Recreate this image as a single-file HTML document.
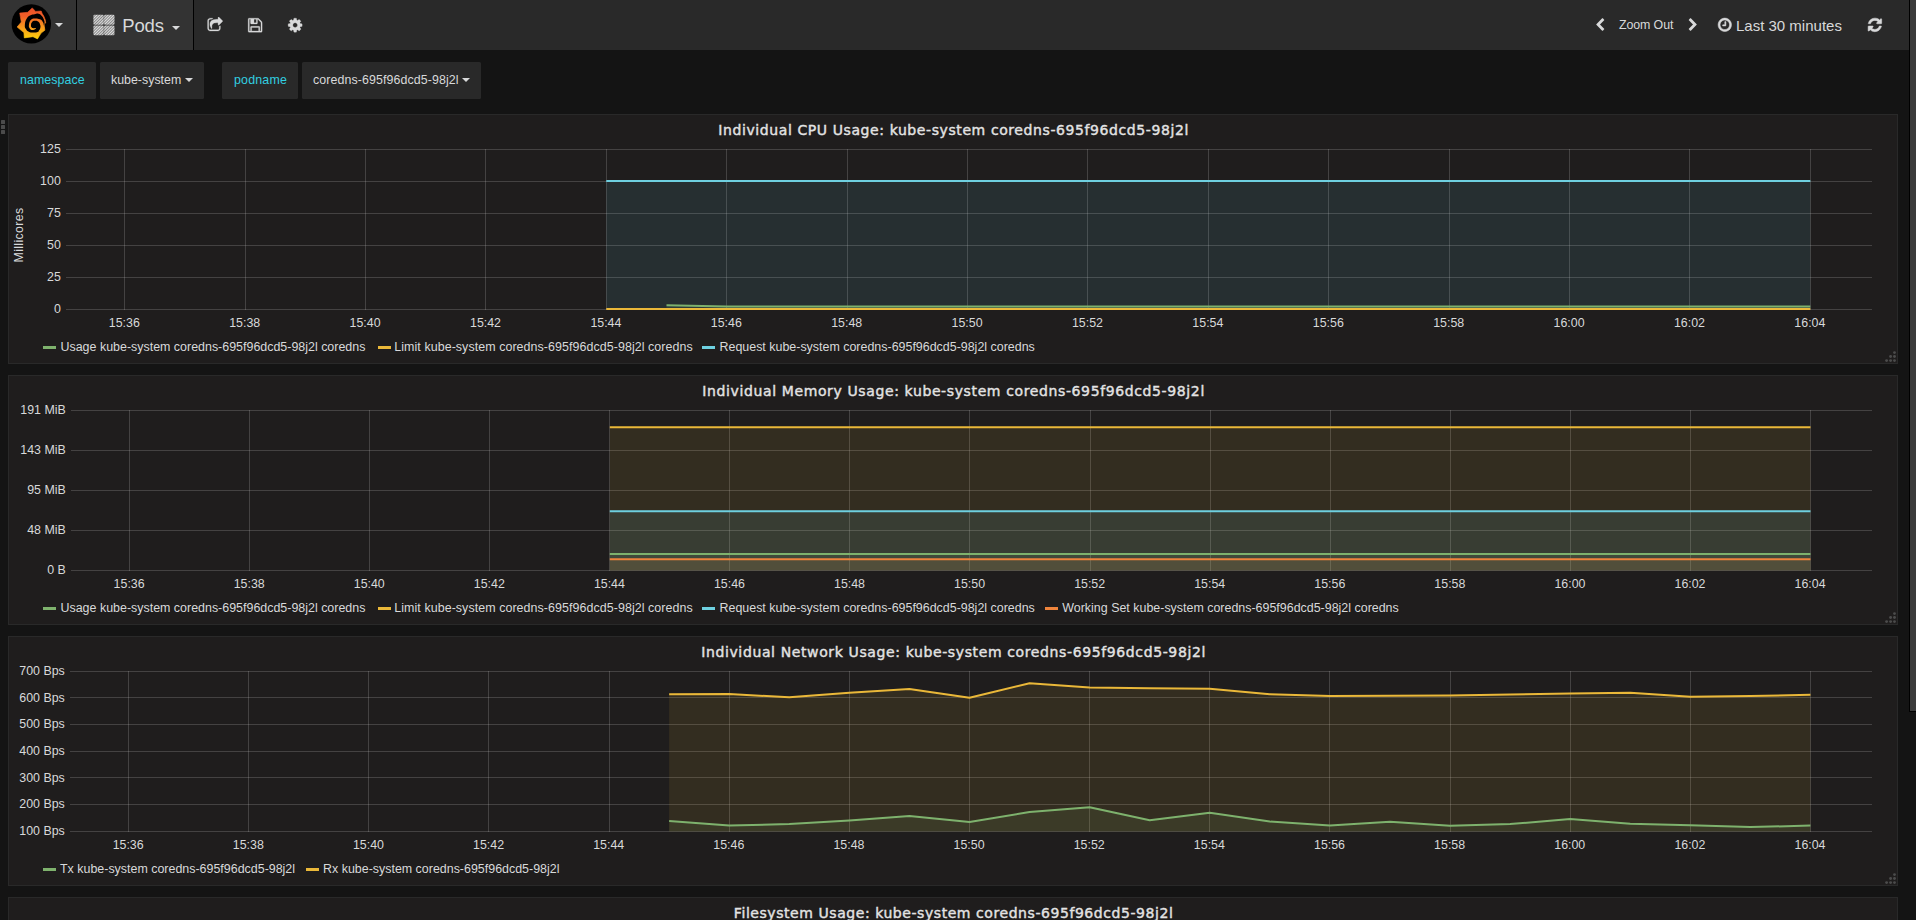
<!DOCTYPE html>
<html lang="en"><head><meta charset="utf-8"><title>Grafana - Pods</title>
<style>
html,body{margin:0;padding:0;width:1916px;height:920px;overflow:hidden;background:#141414}
body{position:relative;font-family:"Liberation Sans",Arial,sans-serif;color:#d8d9da}
.abs,.ic,.plot,.t{position:absolute}
.t{white-space:nowrap;line-height:1;margin:0;padding:0}
.nav{left:0;top:0;width:1909px;height:50px;background:#292929}
.navl{left:0;top:0;width:193px;height:50px;background:#333333}
.vline{width:1px;height:50px;top:0;background:#000}
.caret{width:0;height:0;border-left:4px solid transparent;border-right:4px solid transparent;border-top:4px solid #d8d9da}
.box{background:#292929;border-radius:1.5px;height:37px;top:62px}
.panel{left:8px;width:1888px;height:248px;background:#1f1d1d;border:1px solid #292929}
.title{font-family:"DejaVu Sans","Liberation Sans",sans-serif;font-size:14px;letter-spacing:0.59px;-webkit-text-stroke:0.4px #e3e3e3;color:#e3e3e3;transform:translateX(-50%);left:953.6px}
.yl{font-size:12.4px;text-align:right;width:60px;color:#d8d9da}
.xl{font-size:12.4px;transform:translateX(-50%);color:#d8d9da}
.lg{font-size:12.45px;color:#d8d9da}
.sw{height:3px;width:13px}
.var{font-size:12.4px;top:74.4px}
</style></head><body>

<div class="abs nav"></div><div class="abs navl"></div>
<div class="abs vline" style="left:76px"></div><div class="abs vline" style="left:193px"></div>
<svg class="ic" style="left:11px;top:4px;width:42px;height:42px" viewBox="0 0 42 42">
<defs><linearGradient id="gg" gradientUnits="userSpaceOnUse" x1="0" y1="5" x2="0" y2="35"><stop offset="0" stop-color="#ee5229"/><stop offset="0.25" stop-color="#f15f27"/><stop offset="0.6" stop-color="#f8981d"/><stop offset="1" stop-color="#fdd00b"/></linearGradient></defs>
<circle cx="20.3" cy="19.9" r="19.7" fill="#000"/>
<path fill="url(#gg)" stroke="url(#gg)" stroke-width="0.6" stroke-linejoin="round" d="M21.25 3.9 L24.6 7.4 L30.2 7.0 L31.2 9.6 L32.9 12.3 L34.3 16.0 L34.7 18.9 L33.3 19.9 L33.2 22.0 L33.9 26.2 L30.1 29.1 L26.5 34.9 L22.0 32.7 L13.3 33.9 L12.9 28.6 L6.1 23.0 L10.3 18.1 L8.7 9.1 L16.7 8.3Z"/>
<g transform="translate(-0.35,-0.25)"><path fill="#000" d="M33.90 19.60C34.03 17.75 33.80 17.45 33.10 15.60C32.40 13.75 32.40 13.60 31.10 12.20C29.80 10.80 29.70 10.43 27.90 10.00C26.10 9.57 25.88 10.12 23.90 10.50C21.92 10.88 21.90 10.47 20.00 11.50C18.10 12.53 17.75 12.22 16.30 14.60C14.85 16.98 14.43 18.25 14.20 21.00C13.97 23.75 14.32 23.80 15.40 25.60C16.48 27.40 16.60 27.40 18.50 28.20C20.40 29.00 20.75 28.85 23.00 28.80C25.25 28.75 25.55 28.80 27.50 28.00C29.45 27.20 29.52 26.85 30.80 25.60C32.08 24.35 31.82 24.50 32.60 23.00C33.38 21.50 33.77 21.45 33.90 19.60Z"/>
<path fill="url(#gg)" d="M33.30 26.20C34.53 24.65 33.53 23.65 33.20 21.60C32.87 19.55 32.98 19.50 32.00 18.00C31.02 16.50 31.25 16.43 29.30 15.60C27.35 14.77 26.43 14.57 24.20 14.70C21.97 14.83 21.88 14.52 20.40 16.10C18.92 17.68 18.58 18.80 18.30 21.00C18.02 23.20 18.27 23.60 19.30 24.90C20.33 26.20 20.90 26.30 22.40 26.20C23.90 26.10 25.17 24.93 25.30 24.50C25.43 24.07 24.00 24.75 22.90 24.50C21.80 24.25 21.53 24.38 20.90 23.50C20.27 22.62 20.25 22.30 20.40 21.00C20.55 19.70 20.55 19.28 21.50 18.30C22.45 17.32 22.70 17.23 24.20 17.10C25.70 16.97 26.17 16.82 27.50 17.80C28.83 18.78 28.97 19.32 29.50 21.00C30.03 22.68 29.90 22.80 29.60 24.50C29.30 26.20 27.37 27.37 28.30 27.80C29.23 28.23 32.07 27.75 33.30 26.20Z"/></g>
</svg>
<div class="abs caret" style="left:55px;top:23px"></div>
<svg class="ic" style="left:93px;top:14px;width:22px;height:22px" viewBox="0 0 22 22">
<defs><pattern id="hat" width="2" height="2" patternUnits="userSpaceOnUse" patternTransform="rotate(45)"><rect width="2" height="2" fill="#e0e0e0"/><rect width="0.7" height="2" fill="#5e5e5e"/></pattern></defs>
<rect x="0.4" y="0.8" width="10.4" height="9.9" rx="1.3" fill="url(#hat)"/><rect x="11.1" y="0.8" width="10.4" height="9.9" rx="1.3" fill="url(#hat)"/>
<rect x="0.4" y="11.5" width="10.4" height="9.8" rx="1.3" fill="url(#hat)"/><rect x="11.1" y="11.5" width="10.4" height="9.8" rx="1.3" fill="url(#hat)"/>
</svg>
<div class="t" id="pods" style="left:122.2px;top:17px;font-size:18.5px;letter-spacing:-0.15px;color:#d8d9da">Pods</div>
<div class="abs caret" style="left:172px;top:26px"></div>
<svg class="ic" style="left:206.5px;top:17.1px;width:16.3px;height:16.3px" viewBox="0 0 1792 1792"><path fill="#d8d9da" stroke="#d8d9da" stroke-width="30" stroke-linejoin="round" d="M1472 989v259q0 119-84.500 203.500t-203.500 84.500h-832q-119 0-203.500-84.500t-84.500-203.500v-832q0-119 84.500-203.500t203.500-84.500h255q13 0 22.500 9.500t9.500 22.500q0 27-26 32-77 26-133 60-10 4-16 4h-112q-66 0-113 47t-47 113v832q0 66 47 113t113 47h832q66 0 113-47t47-113v-214q0-19 18-29 28-13 54-37 16-16 35-8 21 9 21 29zm237-496l-384 384q-18 19-45 19-12 0-25-5-39-17-39-59v-192h-160q-323 0-438 131-119 137-74 473 3 23-20 34-8 2-12 2-16 0-26-13-10-14-21-31t-39.500-68.500-49.500-99.500-38.500-114-17.500-122q0-49 3.500-91t14-90 28-88 47-81.500 68.500-74 94.500-61.500 124.500-48.500 159.500-30.500 196.500-11h160v-192q0-42 39-59 13-5 25-5 26 0 45 19l384 384q19 19 19 45t-19 45z"/></svg>
<svg class="ic" style="left:246.6px;top:16.6px;width:16.3px;height:16.3px" viewBox="0 0 1792 1792"><path fill="#d8d9da" stroke="#d8d9da" stroke-width="30" stroke-linejoin="round" d="M512 1536h768v-384h-768v384zm896 0h128v-896q0-14-10-38.500t-20-34.500l-281-281q-10-10-34-20t-39-10v416q0 40-28 68t-68 28h-576q-40 0-68-28t-28-68v-416h-128v1280h128v-416q0-40 28-68t68-28h832q40 0 68 28t28 68v416zm-384-928v-320q0-13-9.500-22.500t-22.500-9.500h-192q-13 0-22.500 9.500t-9.500 22.500v320q0 13 9.500 22.500t22.500 9.500h192q13 0 22.500-9.500t9.500-22.500zm640 32v928q0 40-28 68t-68 28h-1344q-40 0-68-28t-28-68v-1344q0-40 28-68t68-28h928q40 0 88 20t76 48l280 280q28 28 48 76t20 88z"/></svg>
<svg class="ic" style="left:286.6px;top:16.6px;width:16.3px;height:16.3px" viewBox="0 0 1792 1792"><path fill="#d8d9da" stroke="#d8d9da" stroke-width="30" stroke-linejoin="round" d="M1152 896q0-106-75-181t-181-75-181 75-75 181 75 181 181 75 181-75 75-181zm512-109v222q0 12-8 23t-20 13l-185 28q-19 54-39 91 35 50 107 138 10 12 10 25t-9 23q-27 37-99 108t-94 71q-12 0-26-9l-138-108q-44 23-91 38-16 136-29 186-7 28-36 28h-222q-14 0-24.500-8.500t-11.500-21.500l-28-184q-49-16-90-37l-141 107q-10 9-25 9-14 0-25-11-126-114-165-168-7-10-7-23 0-12 8-23 15-21 51-66.500t54-70.500q-27-50-41-99l-183-27q-13-2-21-12.500t-8-23.500v-222q0-12 8-23t19-13l186-28q14-46 39-92-40-57-107-138-10-12-10-24 0-10 9-23 26-36 98.500-107.500t94.500-71.500q13 0 26 10l138 107q44-23 91-38 16-136 29-186 7-28 36-28h222q14 0 24.500 8.500t11.500 21.500l28 184q49 16 90 37l142-107q9-9 24-9 13 0 25 10 129 119 165 170 7 8 7 22 0 12-8 23-15 21-51 66.500t-54 70.500q26 50 41 98l183 28q13 2 21 12.500t8 23.500z"/></svg>
<svg class="ic" style="left:1593.0px;top:18px;width:14px;height:14px" viewBox="0 0 1792 1792"><path fill="#d8d9da" d="M1427 301l-531 531 531 531q19 19 19 45t-19 45l-166 166q-19 19-45 19t-45-19l-742-742q-19-19-19-45t19-45l742-742q19-19 45-19t45 19l166 166q19 19 19 45t-19 45z"/></svg>
<div class="t" id="zoomout" style="left:1619px;top:19.4px;font-size:12.4px;letter-spacing:-0.1px">Zoom Out</div>
<svg class="ic" style="left:1686.4px;top:18px;width:14px;height:14px" viewBox="0 0 1792 1792"><path fill="#d8d9da" d="M1363 877l-742 742q-19 19-45 19t-45-19l-166-166q-19-19-19-45t19-45l531-531-531-531q-19-19-19-45t19-45l166-166q19-19 45-19t45 19l742 742q19 19 19 45t-19 45z"/></svg>
<svg class="ic" style="left:1716.8px;top:17.2px;width:15.6px;height:15.6px" viewBox="0 0 1792 1792"><path fill="#d8d9da" stroke="#d8d9da" stroke-width="60" stroke-linejoin="round" d="M1024 544v448q0 14-9 23t-23 9h-320q-14 0-23-9t-9-23v-64q0-14 9-23t23-9h224v-352q0-14 9-23t23-9h64q14 0 23 9t9 23zm416 352q0-148-73-273t-198-198-273-73-273 73-198 198-73 273 73 273 198 198 273 73 273-73 198-198 73-273zm224 0q0 209-103 385.500t-279.500 279.500-385.500 103-385.500-103-279.500-279.500-103-385.500 103-385.500 279.500-279.500 385.500-103 385.500 103 279.500 279.500 103 385.500z"/></svg>
<div class="t" id="last30" style="left:1736px;top:18px;font-size:15px">Last 30 minutes</div>
<svg class="ic" style="left:1867.2px;top:17.4px;width:15.8px;height:15.8px" viewBox="0 0 1792 1792"><path fill="#d8d9da" stroke="#d8d9da" stroke-width="60" stroke-linejoin="round" d="M1639 1056q0 5-1 7-64 268-268 434.500t-478 166.500q-146 0-282.500-55t-243.500-157l-129 129q-19 19-45 19t-45-19-19-45v-448q0-26 19-45t45-19h448q26 0 45 19t19 45-19 45l-137 137q71 66 161 102t187 36q134 0 250-65t186-179q11-17 53-117 8-23 30-23h192q13 0 22.500 9.500t9.500 22.500zm25-800v448q0 26-19 45t-45 19h-448q-26 0-45-19t-19-45 19-45l138-138q-148-137-349-137-134 0-250 65t-186 179q-11 17-53 117-8 23-30 23h-199q-13 0-22.500-9.500t-9.500-22.500v-7q65-268 270-434.500t480-166.500q146 0 284 55.500t245 156.500l130-129q19-19 45-19t45 19 19 45z"/></svg>
<div class="abs" style="left:1909px;top:0;width:7px;height:712px;background:#000"></div>
<div class="abs" style="left:1910px;top:0;width:6px;height:711px;background:#3b3b3b"></div>
<div class="abs box" style="left:8px;width:88px"></div><div class="t var" id="v1" style="left:20px;color:#32cfe0;letter-spacing:0.06px">namespace</div>
<div class="abs box" style="left:100px;width:104px"></div><div class="t var" id="v2" style="left:111px">kube-system</div><div class="abs caret" style="left:185px;top:78px"></div>
<div class="abs box" style="left:222px;width:76px"></div><div class="t var" id="v3" style="left:234px;color:#32cfe0;letter-spacing:0.2px">podname</div>
<div class="abs box" style="left:302px;width:179px"></div><div class="t var" id="v4" style="left:313px;letter-spacing:0.1px">coredns-695f96dcd5-98j2l</div><div class="abs caret" style="left:462px;top:78px"></div>
<div class="abs" style="left:1px;top:120px;width:4px;height:4px;background:#4b4b4b;border-radius:0.5px"></div>
<div class="abs" style="left:1px;top:125px;width:4px;height:4px;background:#4b4b4b;border-radius:0.5px"></div>
<div class="abs" style="left:1px;top:130px;width:4px;height:4px;background:#4b4b4b;border-radius:0.5px"></div>
<div class="abs panel" style="top:114px"></div>
<div class="t title" style="top:122.6px">Individual CPU Usage: kube-system coredns-695f96dcd5-98j2l</div>
<svg class="plot" style="left:8px;top:114px" width="1890" height="250" viewBox="8 114 1890 250">
<path d="M66 149.5H1872" stroke="rgba(200,200,200,0.22)" stroke-width="1" fill="none"/>
<path d="M66 181.5H1872" stroke="rgba(200,200,200,0.22)" stroke-width="1" fill="none"/>
<path d="M66 213.5H1872" stroke="rgba(200,200,200,0.22)" stroke-width="1" fill="none"/>
<path d="M66 245.5H1872" stroke="rgba(200,200,200,0.22)" stroke-width="1" fill="none"/>
<path d="M66 277.5H1872" stroke="rgba(200,200,200,0.22)" stroke-width="1" fill="none"/>
<path d="M66 309.5H1872" stroke="rgba(200,200,200,0.22)" stroke-width="1" fill="none"/>
<path d="M124.5 149V310" stroke="rgba(200,200,200,0.22)" stroke-width="1" fill="none"/>
<path d="M245.5 149V310" stroke="rgba(200,200,200,0.22)" stroke-width="1" fill="none"/>
<path d="M365.5 149V310" stroke="rgba(200,200,200,0.22)" stroke-width="1" fill="none"/>
<path d="M485.5 149V310" stroke="rgba(200,200,200,0.22)" stroke-width="1" fill="none"/>
<path d="M606.5 149V310" stroke="rgba(200,200,200,0.22)" stroke-width="1" fill="none"/>
<path d="M726.5 149V310" stroke="rgba(200,200,200,0.22)" stroke-width="1" fill="none"/>
<path d="M847.5 149V310" stroke="rgba(200,200,200,0.22)" stroke-width="1" fill="none"/>
<path d="M967.5 149V310" stroke="rgba(200,200,200,0.22)" stroke-width="1" fill="none"/>
<path d="M1087.5 149V310" stroke="rgba(200,200,200,0.22)" stroke-width="1" fill="none"/>
<path d="M1208.5 149V310" stroke="rgba(200,200,200,0.22)" stroke-width="1" fill="none"/>
<path d="M1328.5 149V310" stroke="rgba(200,200,200,0.22)" stroke-width="1" fill="none"/>
<path d="M1449.5 149V310" stroke="rgba(200,200,200,0.22)" stroke-width="1" fill="none"/>
<path d="M1569.5 149V310" stroke="rgba(200,200,200,0.22)" stroke-width="1" fill="none"/>
<path d="M1689.5 149V310" stroke="rgba(200,200,200,0.22)" stroke-width="1" fill="none"/>
<path d="M1810.5 149V310" stroke="rgba(200,200,200,0.22)" stroke-width="1" fill="none"/>
<path d="M666.5 305.3 L726.69 306.4 L1810.3 306.4 L1810.3 309.5 L666.5 309.5Z" fill="#7EB26D" fill-opacity="0.1" stroke="none"/>
<path d="M606.3 309 L1810.3 309 L1810.3 309.5 L606.3 309.5Z" fill="#EAB839" fill-opacity="0.1" stroke="none"/>
<path d="M606.3 181 L1810.3 181 L1810.3 309.5 L606.3 309.5Z" fill="#6ED0E0" fill-opacity="0.1" stroke="none"/>
<path d="M666.5 305.3 L726.69 306.4 L1810.3 306.4" fill="none" stroke="#7EB26D" stroke-width="2" stroke-linejoin="round"/>
<path d="M606.3 309 L1810.3 309" fill="none" stroke="#EAB839" stroke-width="2" stroke-linejoin="round"/>
<path d="M606.3 181 L1810.3 181" fill="none" stroke="#6ED0E0" stroke-width="2" stroke-linejoin="round"/>
</svg>
<div class="t yl" style="left:0.7999999999999972px;top:143px">125</div>
<div class="t yl" style="left:0.7999999999999972px;top:175px">100</div>
<div class="t yl" style="left:0.7999999999999972px;top:207px">75</div>
<div class="t yl" style="left:0.7999999999999972px;top:239px">50</div>
<div class="t yl" style="left:0.7999999999999972px;top:271px">25</div>
<div class="t yl" style="left:0.7999999999999972px;top:303px">0</div>
<div class="t xl" style="left:124.29px;top:317px">15:36</div>
<div class="t xl" style="left:244.69px;top:317px">15:38</div>
<div class="t xl" style="left:365.1px;top:317px">15:40</div>
<div class="t xl" style="left:485.5px;top:317px">15:42</div>
<div class="t xl" style="left:605.9px;top:317px">15:44</div>
<div class="t xl" style="left:726.29px;top:317px">15:46</div>
<div class="t xl" style="left:846.7px;top:317px">15:48</div>
<div class="t xl" style="left:967.1px;top:317px">15:50</div>
<div class="t xl" style="left:1087.49px;top:317px">15:52</div>
<div class="t xl" style="left:1207.89px;top:317px">15:54</div>
<div class="t xl" style="left:1328.29px;top:317px">15:56</div>
<div class="t xl" style="left:1448.69px;top:317px">15:58</div>
<div class="t xl" style="left:1569.1px;top:317px">16:00</div>
<div class="t xl" style="left:1689.49px;top:317px">16:02</div>
<div class="t xl" style="left:1809.89px;top:317px">16:04</div>
<div class="t" style="left:12.6px;top:235.0px;font-size:12.4px;letter-spacing:0.33px;transform-origin:0 0;transform:rotate(-90deg) translateX(-50%)">Millicores</div>
<div class="abs sw" style="left:43px;top:346px;background:#7EB26D"></div><div class="t lg" style="left:60.5px;top:341px">Usage kube-system coredns-695f96dcd5-98j2l coredns</div>
<div class="abs sw" style="left:377.5px;top:346px;background:#EAB839"></div><div class="t lg" style="left:394.3px;top:341px;letter-spacing:0.065px">Limit kube-system coredns-695f96dcd5-98j2l coredns</div>
<div class="abs sw" style="left:702px;top:346px;background:#6ED0E0"></div><div class="t lg" style="left:719.5px;top:341px">Request kube-system coredns-695f96dcd5-98j2l coredns</div>
<svg class="ic" style="left:1884px;top:350px;width:13px;height:13px" viewBox="1884 236 13 13"><g fill="#4c4c4c"><circle cx="1894.5" cy="238.6" r="1.45"/><circle cx="1890.6" cy="242.5" r="1.45"/><circle cx="1894.5" cy="242.5" r="1.45"/><circle cx="1886.6" cy="246.6" r="1.45"/><circle cx="1890.6" cy="246.6" r="1.45"/><circle cx="1894.5" cy="246.6" r="1.45"/></g></svg>
<div class="abs panel" style="top:375px"></div>
<div class="t title" style="top:383.6px;letter-spacing:0.62px">Individual Memory Usage: kube-system coredns-695f96dcd5-98j2l</div>
<svg class="plot" style="left:8px;top:375px" width="1890" height="250" viewBox="8 375 1890 250">
<path d="M71 410.5H1872" stroke="rgba(200,200,200,0.22)" stroke-width="1" fill="none"/>
<path d="M71 450.5H1872" stroke="rgba(200,200,200,0.22)" stroke-width="1" fill="none"/>
<path d="M71 490.5H1872" stroke="rgba(200,200,200,0.22)" stroke-width="1" fill="none"/>
<path d="M71 530.5H1872" stroke="rgba(200,200,200,0.22)" stroke-width="1" fill="none"/>
<path d="M71 570.5H1872" stroke="rgba(200,200,200,0.22)" stroke-width="1" fill="none"/>
<path d="M129.5 410V571" stroke="rgba(200,200,200,0.22)" stroke-width="1" fill="none"/>
<path d="M249.5 410V571" stroke="rgba(200,200,200,0.22)" stroke-width="1" fill="none"/>
<path d="M369.5 410V571" stroke="rgba(200,200,200,0.22)" stroke-width="1" fill="none"/>
<path d="M489.5 410V571" stroke="rgba(200,200,200,0.22)" stroke-width="1" fill="none"/>
<path d="M609.5 410V571" stroke="rgba(200,200,200,0.22)" stroke-width="1" fill="none"/>
<path d="M729.5 410V571" stroke="rgba(200,200,200,0.22)" stroke-width="1" fill="none"/>
<path d="M849.5 410V571" stroke="rgba(200,200,200,0.22)" stroke-width="1" fill="none"/>
<path d="M969.5 410V571" stroke="rgba(200,200,200,0.22)" stroke-width="1" fill="none"/>
<path d="M1090.5 410V571" stroke="rgba(200,200,200,0.22)" stroke-width="1" fill="none"/>
<path d="M1210.5 410V571" stroke="rgba(200,200,200,0.22)" stroke-width="1" fill="none"/>
<path d="M1330.5 410V571" stroke="rgba(200,200,200,0.22)" stroke-width="1" fill="none"/>
<path d="M1450.5 410V571" stroke="rgba(200,200,200,0.22)" stroke-width="1" fill="none"/>
<path d="M1570.5 410V571" stroke="rgba(200,200,200,0.22)" stroke-width="1" fill="none"/>
<path d="M1690.5 410V571" stroke="rgba(200,200,200,0.22)" stroke-width="1" fill="none"/>
<path d="M1810.5 410V571" stroke="rgba(200,200,200,0.22)" stroke-width="1" fill="none"/>
<path d="M609.8 554 L1810.47 554 L1810.47 570.5 L609.8 570.5Z" fill="#7EB26D" fill-opacity="0.1" stroke="none"/>
<path d="M609.8 427.2 L1810.47 427.2 L1810.47 570.5 L609.8 570.5Z" fill="#EAB839" fill-opacity="0.1" stroke="none"/>
<path d="M609.8 511.2 L1810.47 511.2 L1810.47 570.5 L609.8 570.5Z" fill="#6ED0E0" fill-opacity="0.1" stroke="none"/>
<path d="M609.8 559.2 L1810.47 559.2 L1810.47 570.5 L609.8 570.5Z" fill="#EF843C" fill-opacity="0.1" stroke="none"/>
<path d="M609.8 554 L1810.47 554" fill="none" stroke="#7EB26D" stroke-width="2" stroke-linejoin="round"/>
<path d="M609.8 427.2 L1810.47 427.2" fill="none" stroke="#EAB839" stroke-width="2" stroke-linejoin="round"/>
<path d="M609.8 511.2 L1810.47 511.2" fill="none" stroke="#6ED0E0" stroke-width="2" stroke-linejoin="round"/>
<path d="M609.8 559.2 L1810.47 559.2" fill="none" stroke="#EF843C" stroke-width="2" stroke-linejoin="round"/>
</svg>
<div class="t yl" style="left:5.799999999999997px;top:404px">191 MiB</div>
<div class="t yl" style="left:5.799999999999997px;top:444px">143 MiB</div>
<div class="t yl" style="left:5.799999999999997px;top:484px">95 MiB</div>
<div class="t yl" style="left:5.799999999999997px;top:524px">48 MiB</div>
<div class="t yl" style="left:5.799999999999997px;top:564px">0 B</div>
<div class="t xl" style="left:129.13px;top:578px">15:36</div>
<div class="t xl" style="left:249.2px;top:578px">15:38</div>
<div class="t xl" style="left:369.27px;top:578px">15:40</div>
<div class="t xl" style="left:489.33px;top:578px">15:42</div>
<div class="t xl" style="left:609.4px;top:578px">15:44</div>
<div class="t xl" style="left:729.47px;top:578px">15:46</div>
<div class="t xl" style="left:849.53px;top:578px">15:48</div>
<div class="t xl" style="left:969.6px;top:578px">15:50</div>
<div class="t xl" style="left:1089.67px;top:578px">15:52</div>
<div class="t xl" style="left:1209.73px;top:578px">15:54</div>
<div class="t xl" style="left:1329.8px;top:578px">15:56</div>
<div class="t xl" style="left:1449.87px;top:578px">15:58</div>
<div class="t xl" style="left:1569.93px;top:578px">16:00</div>
<div class="t xl" style="left:1690px;top:578px">16:02</div>
<div class="t xl" style="left:1810.07px;top:578px">16:04</div>
<div class="abs sw" style="left:43px;top:607px;background:#7EB26D"></div><div class="t lg" style="left:60.5px;top:602px">Usage kube-system coredns-695f96dcd5-98j2l coredns</div>
<div class="abs sw" style="left:377.5px;top:607px;background:#EAB839"></div><div class="t lg" style="left:394.3px;top:602px;letter-spacing:0.065px">Limit kube-system coredns-695f96dcd5-98j2l coredns</div>
<div class="abs sw" style="left:702px;top:607px;background:#6ED0E0"></div><div class="t lg" style="left:719.5px;top:602px">Request kube-system coredns-695f96dcd5-98j2l coredns</div>
<div class="abs sw" style="left:1045px;top:607px;background:#EF843C"></div><div class="t lg" style="left:1062.3px;top:602px">Working Set kube-system coredns-695f96dcd5-98j2l coredns</div>
<svg class="ic" style="left:1884px;top:611px;width:13px;height:13px" viewBox="1884 236 13 13"><g fill="#4c4c4c"><circle cx="1894.5" cy="238.6" r="1.45"/><circle cx="1890.6" cy="242.5" r="1.45"/><circle cx="1894.5" cy="242.5" r="1.45"/><circle cx="1886.6" cy="246.6" r="1.45"/><circle cx="1890.6" cy="246.6" r="1.45"/><circle cx="1894.5" cy="246.6" r="1.45"/></g></svg>
<div class="abs panel" style="top:636px"></div>
<div class="t title" style="top:644.6px;letter-spacing:0.62px">Individual Network Usage: kube-system coredns-695f96dcd5-98j2l</div>
<svg class="plot" style="left:8px;top:636px" width="1890" height="250" viewBox="8 636 1890 250">
<path d="M70 671.5H1872" stroke="rgba(200,200,200,0.22)" stroke-width="1" fill="none"/>
<path d="M70 697.5H1872" stroke="rgba(200,200,200,0.22)" stroke-width="1" fill="none"/>
<path d="M70 724.5H1872" stroke="rgba(200,200,200,0.22)" stroke-width="1" fill="none"/>
<path d="M70 751.5H1872" stroke="rgba(200,200,200,0.22)" stroke-width="1" fill="none"/>
<path d="M70 777.5H1872" stroke="rgba(200,200,200,0.22)" stroke-width="1" fill="none"/>
<path d="M70 804.5H1872" stroke="rgba(200,200,200,0.22)" stroke-width="1" fill="none"/>
<path d="M70 831.5H1872" stroke="rgba(200,200,200,0.22)" stroke-width="1" fill="none"/>
<path d="M128.5 671V832" stroke="rgba(200,200,200,0.22)" stroke-width="1" fill="none"/>
<path d="M248.5 671V832" stroke="rgba(200,200,200,0.22)" stroke-width="1" fill="none"/>
<path d="M368.5 671V832" stroke="rgba(200,200,200,0.22)" stroke-width="1" fill="none"/>
<path d="M488.5 671V832" stroke="rgba(200,200,200,0.22)" stroke-width="1" fill="none"/>
<path d="M609.5 671V832" stroke="rgba(200,200,200,0.22)" stroke-width="1" fill="none"/>
<path d="M729.5 671V832" stroke="rgba(200,200,200,0.22)" stroke-width="1" fill="none"/>
<path d="M849.5 671V832" stroke="rgba(200,200,200,0.22)" stroke-width="1" fill="none"/>
<path d="M969.5 671V832" stroke="rgba(200,200,200,0.22)" stroke-width="1" fill="none"/>
<path d="M1089.5 671V832" stroke="rgba(200,200,200,0.22)" stroke-width="1" fill="none"/>
<path d="M1209.5 671V832" stroke="rgba(200,200,200,0.22)" stroke-width="1" fill="none"/>
<path d="M1329.5 671V832" stroke="rgba(200,200,200,0.22)" stroke-width="1" fill="none"/>
<path d="M1450.5 671V832" stroke="rgba(200,200,200,0.22)" stroke-width="1" fill="none"/>
<path d="M1570.5 671V832" stroke="rgba(200,200,200,0.22)" stroke-width="1" fill="none"/>
<path d="M1690.5 671V832" stroke="rgba(200,200,200,0.22)" stroke-width="1" fill="none"/>
<path d="M1810.5 671V832" stroke="rgba(200,200,200,0.22)" stroke-width="1" fill="none"/>
<path d="M669.16 821 L729.23 825.6 L789.3 824.1 L849.37 820.5 L909.43 816 L969.5 822.1 L1029.57 812 L1089.63 807.3 L1149.7 820.3 L1209.77 812.8 L1269.83 821.6 L1329.9 825.6 L1389.97 821.8 L1450.03 825.8 L1510.1 824.1 L1570.17 818.9 L1630.23 823.8 L1690.3 825.3 L1750.37 827.1 L1810.43 825.6 L1810.43 831.5 L669.16 831.5Z" fill="#7EB26D" fill-opacity="0.1" stroke="none"/>
<path d="M669.16 694.3 L729.23 694 L789.3 697.3 L849.37 692.8 L909.43 689 L969.5 697.8 L1029.57 683.3 L1089.63 687.5 L1149.7 688.3 L1209.77 688.8 L1269.83 694.3 L1329.9 696.1 L1389.97 695.8 L1450.03 695.6 L1510.1 694.5 L1570.17 693.5 L1630.23 692.8 L1690.3 696.8 L1750.37 696.1 L1810.43 694.8 L1810.43 831.5 L669.16 831.5Z" fill="#EAB839" fill-opacity="0.1" stroke="none"/>
<path d="M669.16 821 L729.23 825.6 L789.3 824.1 L849.37 820.5 L909.43 816 L969.5 822.1 L1029.57 812 L1089.63 807.3 L1149.7 820.3 L1209.77 812.8 L1269.83 821.6 L1329.9 825.6 L1389.97 821.8 L1450.03 825.8 L1510.1 824.1 L1570.17 818.9 L1630.23 823.8 L1690.3 825.3 L1750.37 827.1 L1810.43 825.6" fill="none" stroke="#7EB26D" stroke-width="2" stroke-linejoin="round"/>
<path d="M669.16 694.3 L729.23 694 L789.3 697.3 L849.37 692.8 L909.43 689 L969.5 697.8 L1029.57 683.3 L1089.63 687.5 L1149.7 688.3 L1209.77 688.8 L1269.83 694.3 L1329.9 696.1 L1389.97 695.8 L1450.03 695.6 L1510.1 694.5 L1570.17 693.5 L1630.23 692.8 L1690.3 696.8 L1750.37 696.1 L1810.43 694.8" fill="none" stroke="#EAB839" stroke-width="2" stroke-linejoin="round"/>
</svg>
<div class="t yl" style="left:4.799999999999997px;top:665px">700 Bps</div>
<div class="t yl" style="left:4.799999999999997px;top:692px">600 Bps</div>
<div class="t yl" style="left:4.799999999999997px;top:718px">500 Bps</div>
<div class="t yl" style="left:4.799999999999997px;top:745px">400 Bps</div>
<div class="t yl" style="left:4.799999999999997px;top:772px">300 Bps</div>
<div class="t yl" style="left:4.799999999999997px;top:798px">200 Bps</div>
<div class="t yl" style="left:4.799999999999997px;top:825px">100 Bps</div>
<div class="t xl" style="left:128.16px;top:839px">15:36</div>
<div class="t xl" style="left:248.3px;top:839px">15:38</div>
<div class="t xl" style="left:368.43px;top:839px">15:40</div>
<div class="t xl" style="left:488.57px;top:839px">15:42</div>
<div class="t xl" style="left:608.7px;top:839px">15:44</div>
<div class="t xl" style="left:728.83px;top:839px">15:46</div>
<div class="t xl" style="left:848.97px;top:839px">15:48</div>
<div class="t xl" style="left:969.1px;top:839px">15:50</div>
<div class="t xl" style="left:1089.23px;top:839px">15:52</div>
<div class="t xl" style="left:1209.37px;top:839px">15:54</div>
<div class="t xl" style="left:1329.5px;top:839px">15:56</div>
<div class="t xl" style="left:1449.63px;top:839px">15:58</div>
<div class="t xl" style="left:1569.77px;top:839px">16:00</div>
<div class="t xl" style="left:1689.9px;top:839px">16:02</div>
<div class="t xl" style="left:1810.03px;top:839px">16:04</div>
<div class="abs sw" style="left:43px;top:868px;background:#7EB26D"></div><div class="t lg" style="left:60px;top:863px">Tx kube-system coredns-695f96dcd5-98j2l</div>
<div class="abs sw" style="left:306.2px;top:868px;background:#EAB839"></div><div class="t lg" style="left:323px;top:863px">Rx kube-system coredns-695f96dcd5-98j2l</div>
<svg class="ic" style="left:1884px;top:872px;width:13px;height:13px" viewBox="1884 236 13 13"><g fill="#4c4c4c"><circle cx="1894.5" cy="238.6" r="1.45"/><circle cx="1890.6" cy="242.5" r="1.45"/><circle cx="1894.5" cy="242.5" r="1.45"/><circle cx="1886.6" cy="246.6" r="1.45"/><circle cx="1890.6" cy="246.6" r="1.45"/><circle cx="1894.5" cy="246.6" r="1.45"/></g></svg>
<div class="abs panel" style="top:897px"></div>
<div class="t title" style="top:905.6px;letter-spacing:0.56px">Filesystem Usage: kube-system coredns-695f96dcd5-98j2l</div>
</body></html>
